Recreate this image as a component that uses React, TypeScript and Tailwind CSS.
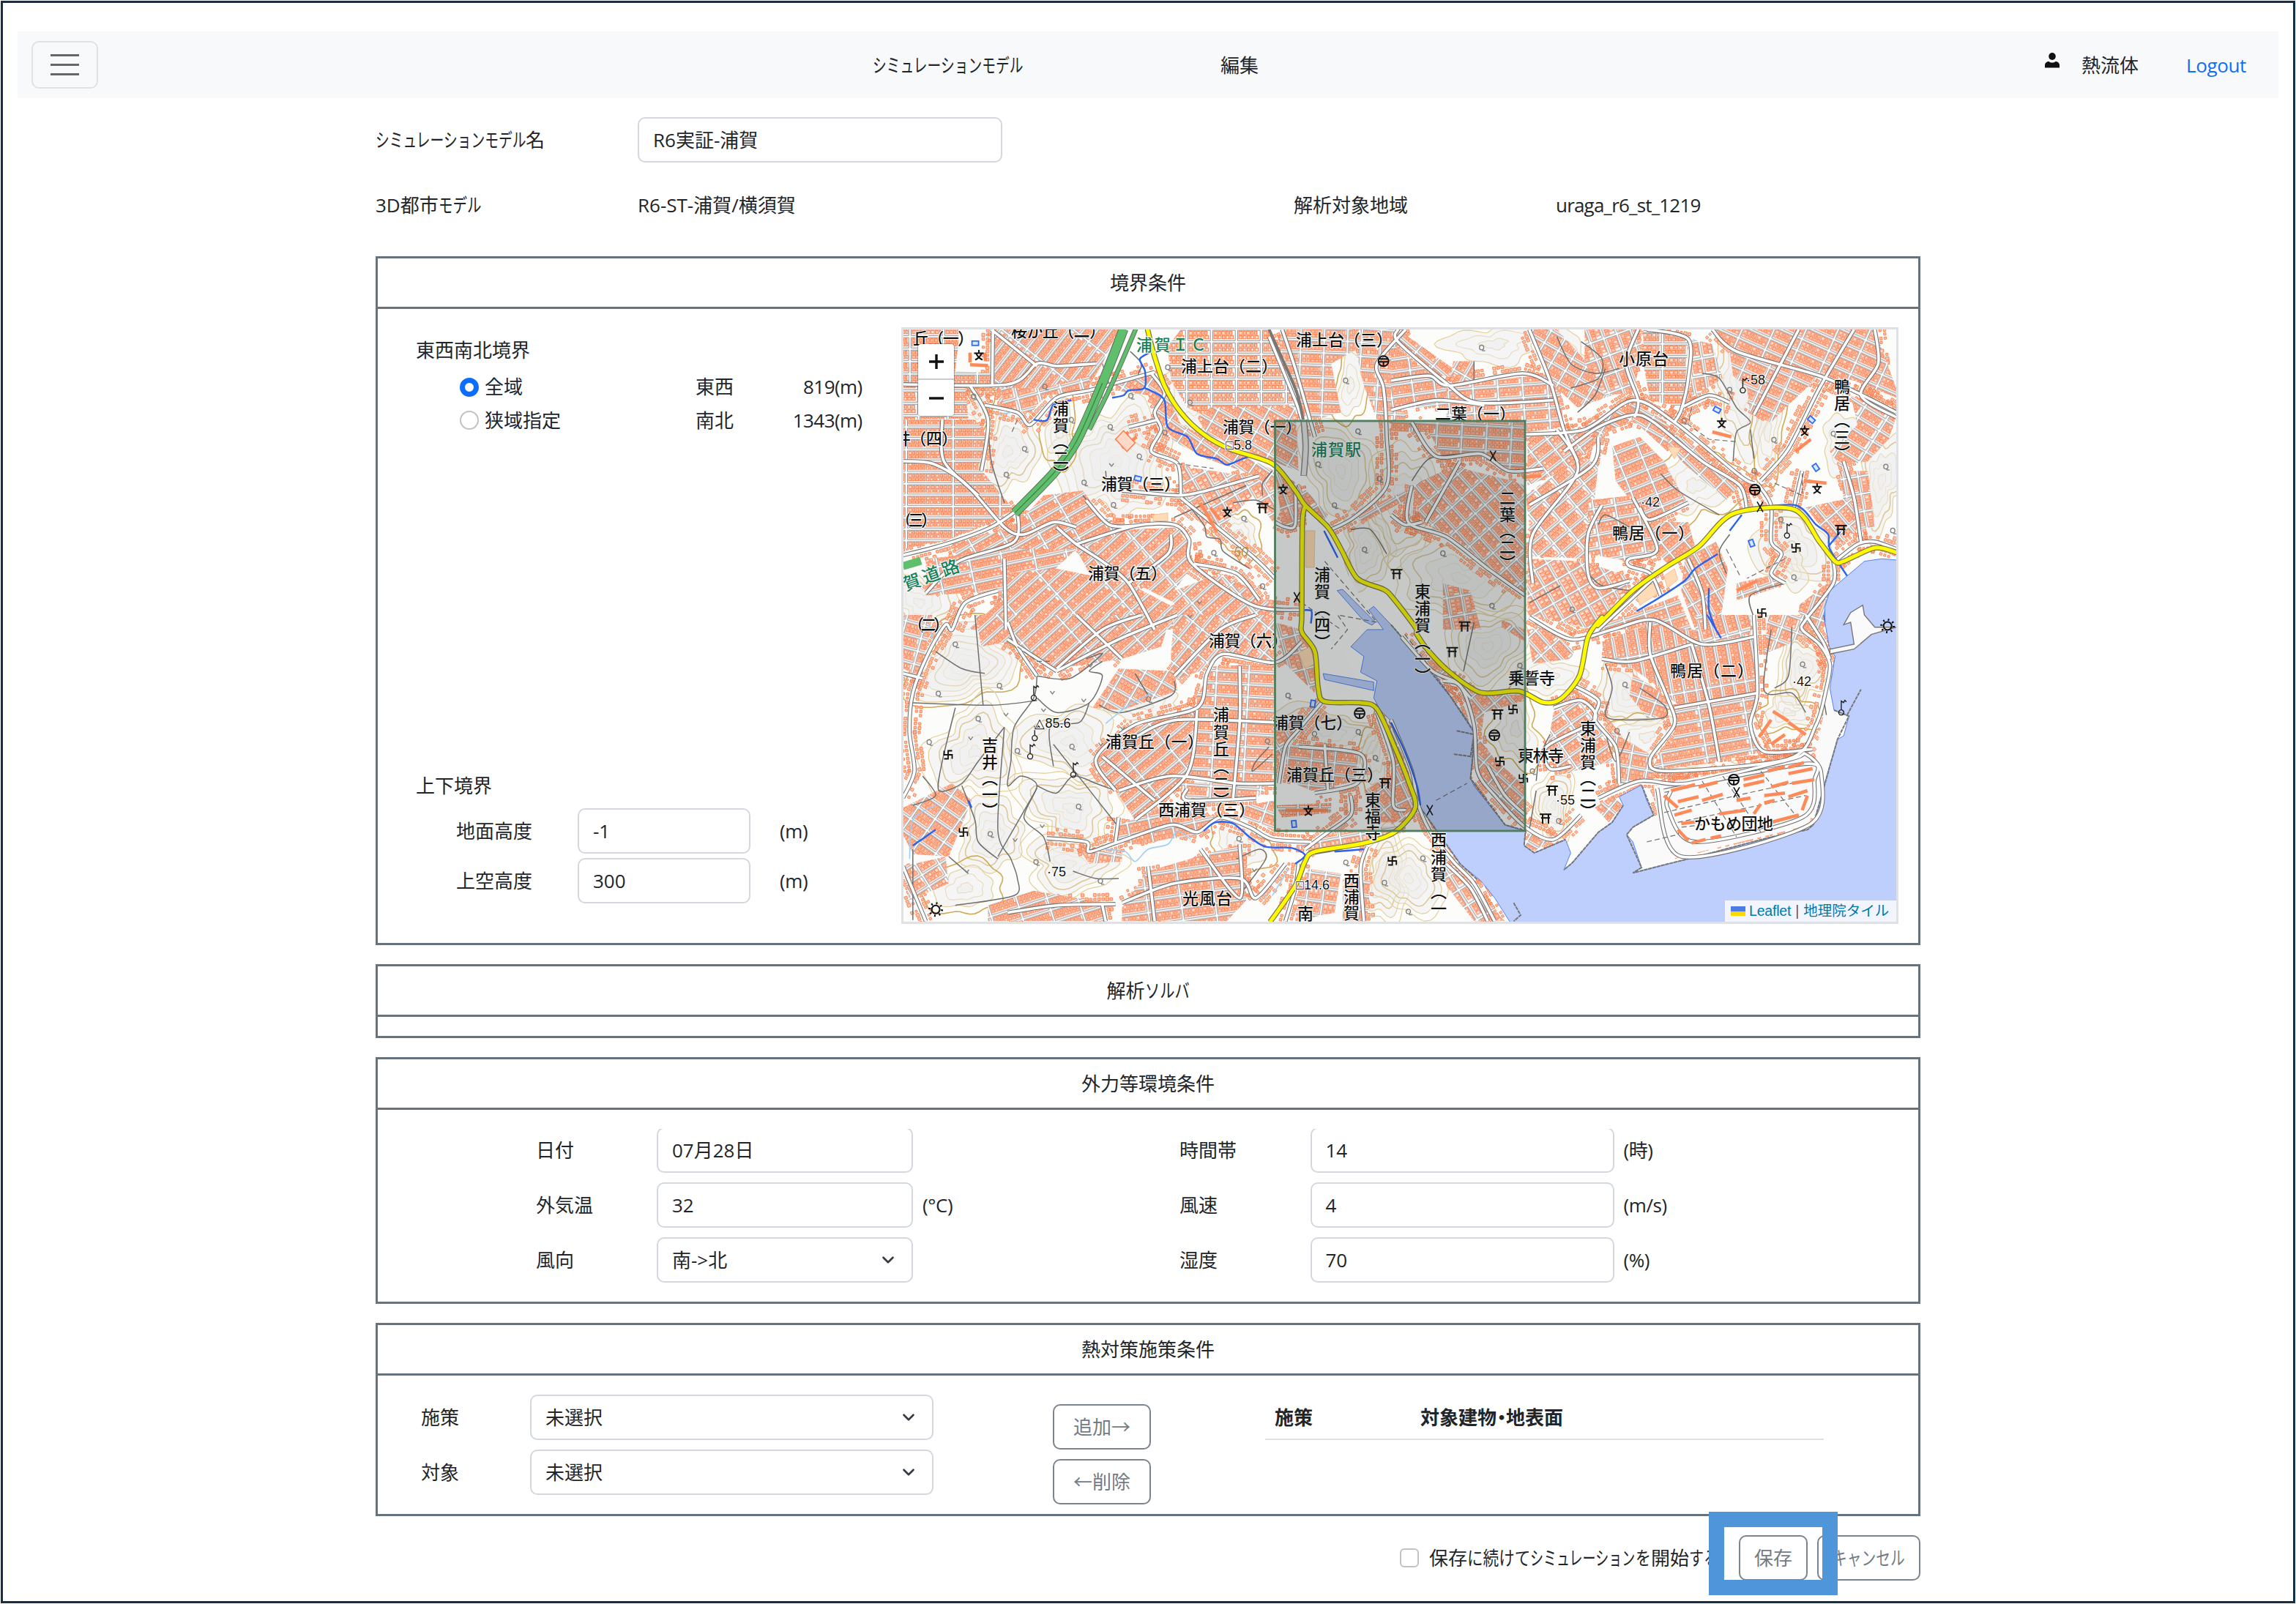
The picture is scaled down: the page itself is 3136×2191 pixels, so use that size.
import React from 'react';
import { ChevronDown } from 'lucide-react';

/* ---------- map geometry ---------- */

type Pt = [number, number];

// The map is digitised in four sheets; each has its own origin and scale.
const SHEETS: Record<string, [number, number, number, number]> = {
  a: [1220, 430, 2.24, 3],
  b: [1900, 430, 2.119, 3],
  c: [1220, 840, 2.24, 3],
  d: [1900, 840, 2.119, 3],
};

// "a 10 20 30 40 c 5 6" -> points; a letter switches the sheet.
function pts(src: string): Pt[] {
  const out: Pt[] = [];
  let s = SHEETS.a;
  const tok = src.trim().split(/\s+/);
  for (let i = 0; i < tok.length; ) {
    if (SHEETS[tok[i]]) {
      s = SHEETS[tok[i]];
      i++;
    } else {
      out.push([s[0] + Number(tok[i]) / s[2], s[1] + Number(tok[i + 1]) / s[3]]);
      i += 2;
    }
  }
  return out;
}

const f = (n: number) => n.toFixed(1);

const line = (src: string, close = false) =>
  'M' + pts(src).map((p) => f(p[0]) + ' ' + f(p[1])).join('L') + (close ? 'Z' : '');

function curve(src: string): string {
  const p = pts(src);
  let d = `M${f(p[0][0])} ${f(p[0][1])}`;
  for (let i = 0; i < p.length - 1; i++) {
    const p0 = p[Math.max(0, i - 1)];
    const p1 = p[i];
    const p2 = p[i + 1];
    const p3 = p[Math.min(p.length - 1, i + 2)];
    d += `C${f(p1[0] + (p2[0] - p0[0]) / 7)} ${f(p1[1] + (p2[1] - p0[1]) / 7)} ${f(p2[0] - (p3[0] - p1[0]) / 7)} ${f(p2[1] - (p3[1] - p1[1]) / 7)} ${f(p2[0])} ${f(p2[1])}`;
  }
  return d;
}

function rng(seed: number) {
  let s = seed * 9301 + 49297;
  return () => {
    s = (s * 9301 + 49297) % 233280;
    return s / 233280;
  };
}

// District: outline, street angle, block length, block depth
const DISTRICTS: [string, number, number, number][] = [
  ['a 30 60 200 60 200 110 190 230 300 240 300 280 30 290', 0, 46, 17],
  ['a 310 60 690 60 640 200 600 290 460 310 420 390 330 380 310 290', -52, 60, 15],
  ['a 30 290 220 290 230 425 30 430', 0, 40, 17],
  ['a 30 430 250 430 290 500 260 620 370 800 170 920 30 960', 0, 64, 15.5],
  ['a 180 940 370 870 460 740 580 720 640 830 740 870 640 930 540 960 380 960 200 1010', -30, 44, 16],
  ['a 100 1000 380 960 560 960 480 1060 350 1130 100 1150', -12, 44, 16],
  ['a 560 960 730 880 890 870 920 1020 860 1130 1000 1060 1168 1190 1168 1290 870 1290 860 1180 740 1100 600 1060', -42, 56, 17],
  ['a 340 1060 500 1040 720 1100 860 1200 850 1290 230 1290 330 1170', -42, 60, 17],
  ['a 840 130 880 60 1150 60 1160 110 1230 360 980 430 900 380 850 270', 0, 34, 17],
  ['a 1190 60 1568 60 1568 130 1420 140 1340 200 1370 400 1290 430 1260 400 1180 120', 2, 32, 17],
  ['a 970 380 1230 370 1240 640 1160 600 960 490 930 420', 30, 30, 18],
  ['a 680 280 800 240 840 330 880 450 1090 590 1168 640 1168 770 1090 650 960 590 860 520 800 400 780 330 680 310', 35, 26, 20],
  ['a 880 620 1080 660 1168 700 1168 860 1100 740 1000 880 940 840 890 760', 60, 24, 20],
  ['a 330 300 460 300 600 250 600 310 470 330 420 400 340 390', -15, 30, 18],
  ['a 1168 640 1250 700 1250 870 1190 870', 70, 24, 20],
  ['a 1250 700 1330 820 1310 860 1250 770', 60, 24, 20],
  ['a 1400 820 1568 720 1568 760 1440 850', -30, 30, 18],
  ['a 1400 60 1523 60 1568 430 1480 430 1440 290', 4, 26, 19],
  ['b 0 120 160 290 160 370 0 390', -8, 30, 17],
  ['b 170 290 470 240 490 330 500 460 400 480 160 430 160 330', -4, 34, 17],
  ['b 20 60 160 200 230 270 110 240 20 110', 40, 30, 18],
  ['b 180 190 240 190 240 280 170 270', -60, 24, 18],
  ['b 0 440 389 440 389 650 260 590 150 590 110 480 0 480', 3, 34, 17],
  ['b 60 700 180 620 350 680 389 700 389 1150 170 900 90 850', 48, 28, 18],
  ['b 400 60 480 60 590 230 640 330 540 380 480 300 430 160', 30, 22, 19],
  ['b 560 60 725 60 720 200 700 320 620 330 560 200', 70, 24, 19],
  ['b 730 60 860 90 850 380 750 350 730 200', 0, 36, 17],
  ['b 870 100 930 120 960 260 870 340', 80, 24, 18],
  ['b 940 60 1400 60 1462 300 1462 340 1340 270 1170 220 980 150', 24, 40, 17],
  ['b 980 150 1240 250 1150 370 1100 440 1040 410 1030 300 990 250', 24, 32, 18],
  ['b 1330 330 1462 420 1440 510 1380 600 1300 620 1270 560 1350 450', 32, 34, 17],
  ['b 1300 640 1380 640 1400 870 1320 890', 80, 24, 20],
  ['b 390 740 550 580 600 610 570 1000 410 990', -40, 28, 18],
  ['b 395 480 560 480 600 520 500 640 395 700', -38, 28, 18],
  ['b 560 460 640 400 710 360 790 440 840 520 800 560 700 430 600 500', 30, 26, 18],
  ['b 640 540 720 500 790 600 850 760 740 850 650 680', -22, 32, 18],
  ['b 570 760 700 740 770 960 690 1010 570 980', -10, 30, 18],
  ['b 760 440 860 520 1010 700 970 760 840 600', 44, 30, 17],
  ['b 395 1000 560 1010 700 1080 590 1290 395 1230', 60, 26, 20],
  ['b 740 850 860 850 880 950 800 1020 760 960', -40, 26, 18],
  ['b 850 1000 940 930 975 1040 950 1290 880 1290 840 1130', 60, 30, 18],
  ['b 610 1270 830 1150 870 1290 600 1290', -18, 30, 18],
  ['b 1180 1190 1290 1070 1250 1290 1190 1290', -70, 30, 17],
  ['b 1200 790 1330 750 1350 880 1290 950', 50, 26, 18],
  ['b 1000 1100 1120 1060 1130 1110 1050 1150 1000 1170', -20, 22, 19],
  ['b 150 1100 230 1130 260 1290 150 1290', 80, 26, 20],
  ['c 30 0 120 0 100 140 80 250 30 220', 15, 26, 18],
  ['c 250 0 850 0 820 130 700 180 500 220 350 110 270 130', -42, 60, 17],
  ['c 860 0 1168 0 1168 190 1000 150 940 230 850 270 850 150', -50, 30, 17],
  ['c 980 210 1168 200 1168 690 1040 690 910 660 930 330', 3, 44, 17],
  ['c 620 590 720 470 920 380 910 650 740 840 680 720', -40, 54, 16],
  ['c 690 220 860 230 870 310 700 390 610 380', 30, 26, 20],
  ['c 860 690 1150 680 1110 760 900 750', 4, 34, 17],
  ['c 690 860 840 780 1000 830 930 900 750 940 690 930', -12, 30, 18],
  ['c 1080 780 1168 760 1168 880 1060 830', 20, 28, 18],
  ['c 1200 530 1430 560 1420 680 1280 720 1210 680', 6, 32, 17],
  ['c 1170 780 1340 770 1340 810 1190 830', 0, 30, 18],
  ['c 1220 960 1350 890 1568 860 1568 890 1420 930 1290 960', -10, 28, 19],
  ['c 1440 720 1568 620 1568 850 1480 850', 50, 24, 19],
  ['c 700 1200 780 1050 1060 940 1080 1170 1020 1255 700 1255', -8, 46, 17],
  ['c 290 1190 430 1130 650 1180 650 1255 290 1255', -18, 40, 17],
  ['c 30 790 180 690 240 760 170 990 60 980 30 900', 35, 28, 19],
  ['c 30 1030 160 990 170 1100 50 1170', -32, 28, 18],
  ['c 1270 1040 1370 1060 1350 1220 1230 1255 1240 1120', 8, 22, 19],
  ['c 1375 1080 1460 1090 1450 1255 1375 1255', 8, 22, 19],
  ['c 1168 30 1250 60 1290 170 1290 320 1200 200', 75, 24, 20],
  ['c 1168 460 1230 480 1190 560 1168 640', 60, 24, 20],
  ['c 580 980 700 960 700 1010 600 1020', 10, 22, 19],
  ['d 320 20 389 60 389 110 320 50', 45, 30, 18],
  ['d 393 60 450 50 530 150 520 180 410 200', 48, 30, 17],
  ['d 610 110 740 40 1050 90 1060 320 830 370 790 310 700 220 620 180', 80, 60, 17],
  ['d 880 0 1040 0 1040 80 900 120', 75, 34, 18],
  ['d 820 370 1060 320 1040 450 1080 560 900 610 760 640 770 580 820 500', -10, 62, 17],
  ['d 1090 0 1200 0 1220 60 1150 120 1080 160', 20, 22, 19],
  ['d 470 400 540 350 600 440 640 600 500 650 450 560', -35, 28, 18],
  ['d 640 480 760 580 760 680 660 690', 10, 24, 20],
  ['d 700 240 800 340 800 420 740 420 690 330', 20, 24, 20],
  ['d 80 150 260 320 389 330 389 350 270 400 262 480 210 290 150 270', 50, 26, 19],
  ['d 250 500 300 590 386 700 386 870 250 650', 42, 24, 19],
  ['d 0 420 60 700 60 800 0 860', 65, 24, 19],
  ['d 395 895 460 920 415 970 390 945', 30, 20, 18],
  ['d 590 790 640 740 670 780 630 850', 40, 22, 18],
  ['d 150 1030 220 1100 330 1255 240 1255 160 1110', 58, 24, 19],
];

// Sparse apartment blocks
const SLABS = (
  'd 790 740 830 790 d 830 765 890 745 d 900 760 960 735 d 810 720 880 695 d 890 705 945 685 ' +
  'd 1020 675 1080 655 d 1090 640 1140 622 d 1150 625 1195 605 d 1020 700 1080 680 d 1100 705 1150 685 ' +
  'd 1160 690 1225 675 d 1150 650 1220 630 d 1150 745 1205 720 d 950 815 1025 800 d 1050 815 1070 775 ' +
  'd 1080 770 1110 760 d 820 820 870 800 d 830 880 860 925 d 870 935 910 920 d 925 915 955 905 ' +
  'd 1190 800 1205 740 d 1100 850 1180 820 d 840 855 880 848 d 1100 530 1140 490 d 1105 395 1150 435 ' +
  'd 1150 440 1200 490 d 1065 500 1100 430 d 1080 740 1140 730 d 1000 760 1040 750 ' +
  'a 235 205 290 208 a 235 155 235 195 a 280 155 282 190 ' +
  'a 690 520 720 480 a 700 545 745 500 a 940 770 990 890 a 970 790 1000 840 b 380 665 435 660 ' +
  'b 1000 1130 1060 1090 b 930 480 985 500 b 1170 560 1215 510 b 1195 680 1260 690 c 1200 800 1330 800'
)
  .split(/(?=[abcd] )/)
  .map((s) => s.trim())
  .filter(Boolean);

// Hill: sheet, centre, radii, rings, seed
const HILLS: [string, number, number, number, number, number, number][] = [
  ['a', 350, 560, 95, 190, 5, 2],
  ['a', 680, 600, 160, 270, 7, 3],
  ['a', 1060, 900, 70, 120, 4, 4],
  ['a', 1370, 640, 130, 220, 6, 5],
  ['a', 1450, 950, 90, 160, 5, 6],
  ['a', 1400, 290, 60, 170, 4, 7],
  ['a', 920, 300, 90, 230, 3, 8],
  ['a', 250, 380, 60, 110, 4, 9],
  ['a', 80, 1180, 110, 140, 5, 10],
  ['a', 940, 1210, 60, 90, 3, 12],
  ['a', 510, 480, 60, 160, 4, 13],
  ['b', 300, 120, 150, 90, 3, 14],
  ['b', 40, 760, 110, 280, 6, 15],
  ['b', 200, 1080, 190, 200, 6, 16],
  ['b', 520, 200, 70, 130, 3, 17],
  ['b', 1010, 270, 90, 270, 5, 18],
  ['b', 1090, 480, 60, 200, 4, 19],
  ['b', 1420, 680, 70, 220, 5, 20],
  ['b', 880, 700, 130, 190, 4, 21],
  ['b', 1160, 950, 110, 170, 5, 22],
  ['b', 1150, 1030, 60, 100, 3, 23],
  ['b', 540, 1180, 80, 90, 3, 24],
  ['b', 1300, 520, 60, 120, 3, 25],
  ['c', 220, 200, 180, 180, 8, 26],
  ['c', 250, 560, 140, 230, 6, 27],
  ['c', 540, 520, 150, 170, 5, 28],
  ['c', 540, 790, 160, 170, 6, 29],
  ['c', 540, 1020, 170, 130, 6, 30],
  ['c', 300, 900, 110, 150, 5, 31],
  ['c', 220, 1120, 130, 120, 4, 32],
  ['c', 770, 370, 110, 80, 3, 33],
  ['c', 1110, 580, 60, 150, 3, 34],
  ['c', 1320, 480, 170, 110, 5, 35],
  ['c', 1060, 950, 120, 110, 4, 36],
  ['c', 1500, 1080, 90, 170, 6, 37],
  ['c', 1480, 560, 60, 200, 4, 38],
  ['d', 280, 130, 120, 190, 6, 39],
  ['d', 460, 250, 90, 90, 3, 40],
  ['d', 680, 330, 90, 150, 5, 41],
  ['d', 360, 470, 90, 160, 4, 42],
  ['d', 470, 780, 70, 140, 6, 43],
  ['d', 740, 500, 120, 120, 4, 44],
  ['d', 1190, 220, 80, 180, 6, 45],
  ['d', 1150, 400, 90, 100, 4, 46],
  ['d', 50, 1080, 110, 170, 6, 47],
  ['d', 880, 610, 180, 40, 2, 48],
];

function rings([sheet, x, y, rx, ry, n, seed]: (typeof HILLS)[number]): string[] {
  const s = SHEETS[sheet];
  const r = rng(seed);
  const cx = s[0] + x / s[2];
  const cy = s[1] + y / s[3];
  const ph = [r() * 6.3, r() * 6.3, r() * 6.3];
  const amp = [0.1 + r() * 0.14, 0.1 + r() * 0.12, 0.05 + r() * 0.07];
  return Array.from({ length: n }, (_, i) => {
    const k = (i + 0.7) / n;
    let d = '';
    for (let j = 0; j < 48; j++) {
      const t = (j / 48) * Math.PI * 2;
      const w =
        1 +
        amp[0] * Math.sin(2 * t + ph[0] + i * 0.1) +
        amp[1] * Math.sin(3 * t + ph[1] - i * 0.15) +
        amp[2] * Math.sin(7 * t + ph[2] + i * 0.2);
      d += (j ? 'L' : 'M') + f(cx + (rx / s[2]) * k * w * Math.cos(t)) + ' ' + f(cy + (ry / s[3]) * k * w * Math.sin(t));
    }
    return d + 'Z';
  });
}

const STREETS = [
  'a 30 985 160 940 300 870 380 800',
  'a 30 600 120 610 220 690 340 870 400 900 490 850 560 870',
  'a 30 285 350 285 440 200 500 210 620 200',
  'a 305 60 303 285',
  'a 300 60 440 210',
  'a 150 430 155 600 260 740',
  'a 235 290 290 430 270 640',
  'a 280 370 380 400 420 450 500 340 600 310 680 280 800 235',
  'a 560 940 740 865 860 860 905 920 915 1020 1100 1190 1250 1210',
  'a 380 800 370 930 200 1010 100 1140',
  'a 500 870 560 940 640 1010 720 1100 800 1290',
  'a 340 1000 345 1290',
  'a 720 1100 840 980 850 900',
  'a 1150 90 1230 350 1250 430',
  'a 1190 60 1230 220 1290 500',
  'a 1568 60 1480 200 1500 300 1510 500 1510 700 1410 830 1340 880',
  'a 790 240 830 320 800 400 820 470 790 560 870 610 880 740',
  'a 590 760 660 860 740 865',
  'a 700 720 870 740 960 720 1120 660',
  'a 880 750 1100 990 1168 1080',
  'a 720 460 810 430',
  'a 320 1130 220 1180 180 1290 c 160 40 110 150 60 320 50 480 65 640 30 750',
  'a 1120 1170 1050 1060 920 1020',
  'a 1230 700 1230 860 1200 870 1168 850',
  'b 20 60 20 110 160 280 250 360 470 350',
  'b 400 60 460 270 500 470 540 600',
  'b 0 390 130 350 270 370',
  'b 0 270 110 250 170 290 380 240 470 290',
  'b 390 490 560 470 700 350 820 440 1010 660 1050 690',
  'b 500 560 600 460 700 410 760 440 900 600 1010 700 1030 800',
  'b 740 60 860 100 860 260 840 390 820 440',
  'b 840 380 920 330 980 360',
  'b 715 60 680 200 715 350 705 420',
  'b 1340 60 1240 300 1150 550 1070 680',
  'b 930 60 1000 150 1240 250 1350 320 1462 400',
  'b 1180 60 1050 410',
  'b 1400 60 1410 200 1360 330 1462 420',
  'b 1060 690 1100 780 1100 930 1130 980 1100 1060 1140 1100',
  'b 1165 795 1190 640',
  'b 1310 600 1340 750 1360 930',
  'b 1285 1010 1350 940 1400 930 1462 960',
  'b 1280 1010 1280 1100 1200 1250 1190 1290 d 1240 120 1270 200 1260 300 1230 450 1150 590 800 640 750 590 820 450 800 340 750 160 750 30',
  'b 480 470 540 640 410 900 410 1100',
  'b 600 500 580 620 400 780',
  'b 610 780 570 900 570 1060 600 1120 690 1090',
  'b 700 750 770 960 690 1000 690 1030 750 1060 780 1150',
  'b 720 790 750 840 860 770',
  'b 860 1000 900 1140 910 1290',
  'b 760 1080 600 1290',
  'b 60 700 50 850 160 910 280 1040 389 1150',
  'b 0 820 40 860 90 850',
  'b 200 600 100 850',
  'b 60 440 130 580 260 570 340 640 440 630',
  'd 400 10 520 100 640 60 760 20 900 120 1050 90',
  'd 610 180 700 190 870 120',
  'd 530 290 600 350 590 430 650 540 660 690',
  'd 1050 0 1060 320 1040 450 1080 560 1220 550',
  'd 870 120 920 370 950 600',
  'd 820 380 1060 320',
  'd 600 750 720 680 860 690 1160 590 1200 570 1245 650 1210 860 840 990 770 710',
  'd 790 720 1200 610 1225 680 1190 830 880 930 800 790 810 720',
  'd 30 90 120 230 200 290 240 450 250 640 300 740 389 870 470 920 550 820',
  'd 470 380 550 350 590 430 450 540 460 630 520 620',
  'd 0 430 60 640 75 760 110 880 180 1010 240 1100 300 1255',
  'd 160 1020 230 1120 280 1255',
  'd 150 270 190 280 230 340',
  'd 280 620 330 740 389 820',
  'd 1200 0 1250 110 1270 180',
  'c 350 30 380 130 440 250',
  'c 500 220 640 60 760 0',
  'c 500 230 690 100 870 0',
  'c 350 100 500 230',
  'c 560 0 700 180',
  'c 860 250 1000 60 1110 0',
  'c 680 720 620 590 740 450 930 380 960 240 1010 160 1168 195 1250 110',
  'c 740 500 870 430 1168 440',
  'c 930 390 900 650 740 840',
  'c 690 720 850 660 1050 690 1168 690',
  'c 640 580 800 760',
  'c 1060 210 1060 440 1040 750',
  'c 900 710 900 760 1110 750',
  'c 470 915 590 930 600 970 690 930 850 860 930 890 1000 830 1090 870 1160 920 1280 930',
  'c 680 930 690 830',
  'c 700 1180 860 1100 1060 1080 1110 1160 1200 1020',
  'c 350 1220 500 1190 680 1185',
  'c 1060 940 1060 1160 940 960',
  'c 780 1030 800 1255',
  'c 1240 1020 1230 1120 1200 1255',
  'c 1310 360 1240 470 1200 540 1180 690',
  'c 1240 540 1430 570 1420 690 1290 730',
  'c 1320 530 1330 720',
  'c 1480 400 1530 600 1530 780 1568 800',
  'c 1400 740 1400 820 1320 900 1260 960',
  'c 1450 950 1430 1040 1440 1255',
  'c 30 240 90 260',
  'c 30 1030 100 1255',
  'c 640 1190 650 1255',
];

const PATHS = [
  'a 725 150 760 200 750 250 800 230',
  'a 650 640 655 730',
  'a 580 740 640 830 690 880',
  'a 890 760 950 860 960 910 1000 920 1010 970 1090 1040',
  'a 1040 770 1110 760 1168 800',
  'a 1130 740 1130 690 1160 640',
  'a 860 830 1080 700',
  'a 1400 880 1460 880 1510 980',
  'a 290 430 300 600 340 770',
  'b 480 90 520 200 590 240 660 220',
  'b 550 110 610 180 600 260 520 300',
  'b 900 240 950 260 1000 380 1040 440 1000 480 990 600',
  'b 1040 470 1050 590',
  'b 620 220 590 330 540 400',
  'b 240 190 240 280',
  'b 60 680 110 590 200 570',
  'b 570 1060 610 1110 690 1130',
  'b 780 650 830 720 950 820',
  'b 490 1110 400 1180',
  'b 600 860 620 820 690 870',
  'b 980 900 950 970 970 1060',
  'b 1140 1100 1040 1150 1050 1240',
  'c 130 150 210 220 280 240',
  'c 60 360 300 370 440 350',
  'c 440 250 430 340 370 460 360 600 350 700 390 660 440 700 400 830 460 910 480 1010',
  'c 440 340 500 400 600 360 640 250 600 230 640 190',
  'c 440 250 540 260 640 160 590 180',
  'c 600 360 570 440 480 460 490 620',
  'c 190 380 150 600 140 720 210 690 260 600 340 460',
  'c 340 460 320 880 360 1000 380 1080 370 1150 190 1190',
  'c 440 700 500 730 550 660 620 690 680 720',
  'c 320 990 440 710',
  'c 250 0 275 370',
  'c 490 530 690 870',
  'c 90 660 130 740 60 780',
  'c 550 1050 620 1080 690 1080',
  'c 210 700 250 840 260 930 320 1000',
  'c 1050 1000 1120 960 1140 1000 1070 1130',
  'c 630 370 700 400 850 330 860 270',
  'c 1150 540 1110 600 1100 640 1160 570',
  'c 740 240 780 330',
  'c 1290 980 1370 960 1440 930',
  'c 170 990 230 1060',
  'c 60 960 60 1250',
  'd 620 200 640 300 620 410 670 430 790 420 790 370 720 300',
  'd 420 680 430 580 460 490',
  'd 620 480 650 600 690 480',
  'd 400 880 420 720',
  'd 1100 60 1080 310 1160 320 1200 400',
  'd 240 30 210 230',
  'd 1160 50 1150 250 1110 300',
  'd 1250 330 1260 410',
];

const DASHES = [
  'a 1320 1010 1480 1260 c 1360 0 1390 60 1340 140',
  'a 1250 1180 1370 1290',
  'a 380 430 360 490',
  'a 640 200 660 280',
  'a 870 610 980 630',
  'b 870 380 860 450 920 510 1000 520',
  'b 1110 690 1190 740 1190 650',
  'b 1140 1000 1030 1080',
  'b 970 960 1010 1070',
  'd 740 930 830 900 840 870 900 860',
  'd 790 810 1000 740 1190 680',
  'd 830 850 1200 740',
  'd 900 680 1000 910',
  'd 960 660 1070 890',
  'd 130 760 220 690',
  'c 380 130 440 190 480 190',
  'd 40 80 110 210',
  'd 1070 640 1170 820',
];

const RIVERS = [
  'a 800 145 755 180 770 230 768 300 720 310 705 330 670 340',
  'a 768 300 790 312 830 350 840 460 900 500 930 570 990 590 1020 615 1060 595 1090 580',
  'a 430 430 470 432 490 370 545 350',
  'c 950 885 985 850 1040 855 1090 910 1140 950 1220 955 1260 985 1230 1020',
  'c 60 945 130 880',
  'c 1350 970 1440 960',
  'c 230 760 240 790',
  'b 1035 795 1170 780 1230 860 1265 900 1270 960 1320 1070',
  'b 1265 950 1300 890',
  'b 710 1215 770 1165 850 1090 880 1040 945 980',
  'b 920 1120 920 1210 940 1290',
  'd 915 0 955 95',
  'b 980 885 1015 820',
  'a 1318 885 1360 995',
  'a 1258 1210 1280 1215 1278 1265',
  'd 0 440 40 560 75 700 85 780',
];

const BROOKS = [
  'c 650 445 720 370 790 320',
  'c 650 960 710 970 740 1010 780 960 840 940 870 885 910 920',
  'a 320 410 360 400',
  'c 1210 1040 1160 1150',
  'c 50 1000 60 840 130 780',
  'c 120 100 110 30',
];

const YELLOW = [
  'a 778 58 795 150 830 290 880 400 950 490 1030 550 1160 610 1230 720 1260 780 1330 870 1370 960 1420 1080 1500 1125 b 5 1160 70 1280 d 75 80 110 150 170 235 260 318 370 312 440 358 490 345 545 250 570 90 610 10 b 600 1270 700 1130 800 1030 890 950 990 815 1165 797 1240 930 1285 1010 1310 1010 1400 955 1465 975',
  'a 1262 780 1252 850 1250 1230 c 1250 70 1290 150 1300 300 1320 355 1430 360 1480 385 d 10 540 50 680 70 790 10 890 c 1440 935 1290 970 1260 1010 1230 1110 1153 1258',
];

const SEA = [
  'b 1465 1005 1420 1000 1370 1010 1320 1070 1270 1130 1255 1200 1256 1260 d 1252 0 1268 130 1285 170 1270 300 1282 390 1325 415 1310 495 1292 510 1265 640 1240 770 1222 860 1205 880 1100 910 900 985 700 1057 725 1035 700 930 682 900 700 870 760 820 740 760 725 697 660 745 672 780 640 850 600 890 525 1015 500 1045 520 975 505 920 490 930 415 975 385 945 390 885 330 860 290 790 240 700 230 670 235 600 245 490 220 430 170 330 130 250 90 190 0 40 a 1470 1195 1455 1210 1500 1290 c 1450 60 1400 130 1440 170 1430 235 1480 270 1470 340 1490 390 d 0 435 40 560 75 700 85 790 130 880 200 1020 260 1090 300 1160 345 1260 1465 1260',
  'a 1358 1130 1375 1125 1475 1260 1465 1272 1440 1255',
  'c 1315 240 1470 275 1470 310 1320 265',
];

const PIER = 'd 1270 160 1340 140 1390 80 1462 50 1400 50 1370 0 b 1365 1190 1330 1220 1310 1270 d 1330 30 1340 120 1270 140';

const SHORE = [
  'd 1282 390 1325 415 1292 510 1240 770 1222 860 1205 880 1100 910 900 985 700 1057 725 1035 682 900 700 870 760 820 725 697',
  'd 672 780 640 850 600 890 525 1015 500 1045',
  'd 0 40 90 190 170 330 240 480 235 600 230 670 330 860 389 885 385 945 415 975 505 920',
  'd 85 790 130 880 200 1020 250 1085',
  'd 1320 410 1360 305',
  'd 355 1180 375 1230 355 1255',
  'd 190 475 240 490 230 580 180 570',
];

const GREEN = '#17805a';

type Label = [string, number, number, number, string?];

// text, left, right, centre y
const LABELS: Label[] = [
  ['丘（一）', 1247, 1330, 462],
  ['桜が丘（二）', 1381, 1510, 452],
  ['浦賀ＩＣ', 1552, 1648, 471, GREEN],
  ['浦上台（二）', 1613, 1745, 500],
  ['浦上台（三）', 1770, 1902, 464],
  ['二葉（一）', 1960, 2070, 565],
  ['小原台', 2211, 2279, 490],
  ['浦賀（一）', 1670, 1778, 583],
  ['浦賀駅', 1791, 1859, 614, GREEN],
  ['井（四）', 1222, 1308, 599],
  ['浦賀（三）', 1504, 1612, 661],
  ['浦賀（五）', 1486, 1594, 783],
  ['（三）', 1223, 1280, 710],
  ['（二）', 1240, 1297, 853],
  ['鴨居（一）', 2202, 2314, 728],
  ['浦賀（六）', 1651, 1759, 875],
  ['浦賀（七）', 1738, 1847, 987],
  ['浦賀丘（一）', 1510, 1644, 1013],
  ['浦賀丘（三）', 1757, 1889, 1058],
  ['西浦賀（三）', 1582, 1714, 1106],
  ['光風台', 1615, 1683, 1227],
  ['南', 1772, 1794, 1248],
  ['乗誓寺', 2060, 2124, 926],
  ['東林寺', 2073, 2136, 1032],
  ['鴨居（二）', 2281, 2395, 916],
  ['かもめ団地', 2314, 2422, 1125],
];

// text, centre x, top, bottom
const VERTICAL: [string, number, number, number][] = [
  ['浦賀（二）', 1449, 547, 658],
  ['鴨居（三）', 2516, 517, 630],
  ['二葉（二）', 2059, 669, 780],
  ['東浦賀（一）', 1943, 797, 934],
  ['浦賀（四）', 1806, 774, 888],
  ['浦賀丘（二）', 1668, 965, 1104],
  ['吉井（一）', 1352, 1007, 1118],
  ['東福寺', 1875, 1082, 1148],
  ['西浦賀', 1846, 1192, 1258],
  ['西浦賀（一', 1965, 1136, 1252],
  ['東浦賀（二）', 2169, 984, 1119],
];

const SPOTS: [string, number, number][] = [
  ['·58', 2398, 518],
  ['·42', 2254, 685],
  ['·42', 2461, 930],
  ['·55', 2138, 1092],
  ['△85.6', 1438, 987],
  ['·75', 1443, 1190],
  ['□14.6', 1793, 1208],
  ['□5.8', 1692, 607],
];

const SCHOOLS = 'a 262 165 1022 808 1193 715 b 957 443 1197 475 1233 712 c 1270 802';
const TEMPLES = 'b 1172 955 1073 1222 c 168 573 215 890 1527 1008 d 353 387 315 600 383 670';
const SHRINES = 'a 1130 793 1540 1063 b 1302 882 c 1505 690 d 213 47 177 152 308 408 466 720 447 835';
const POSTS = 'a 1500 190 b 1053 717 c 1427 403 d 299 493 992 675';
const POLICE = 'a 1235 1158 b 295 578 1068 787 d 1000 727 112 800';
const GEARS = 'c 130 1207 b 1437 1275';
const TOWERS = 'b 1018 290 1146 885 c 430 320 433 485 419 560 551 635 d 1303 380';
const POOLS = 'a 250 118 747 672 b 942 390 1215 430 1228 625 1042 935 c 1225 855 1283 362';
const TREES =
  'a 246 337 464 297 545 433 402 552 346 658 664 462 727 335 840 218 908 362 753 583 584 690 674 782 831 485 1384 272 1422 480 1300 615 1488 675 1350 783 1073 838 981 978 1130 1115 1442 965 ' +
  'b 262 137 150 980 292 1195 848 437 980 310 1108 515 1051 642 1128 842 1166 1078 1432 625 1280 490 1452 887 524 1210 ' +
  'c 190 123 138 325 325 293 260 428 110 524 380 560 547 542 781 348 567 788 437 1015 634 1093 297 900 1058 920 1145 520 1208 333 1289 490 1423 482 1475 588 1385 1017 1503 1100 ' +
  'd 373 210 677 288 1191 205 654 478 409 643 485 847 92 1000 50 1218';
const FIELDS = 'a 668 615 937 1178 908 1235 c 487 318 583 350 460 390 345 408 237 505 635 530 702 465 603 207 456 865 373 922 225 1050 1105 1045';

// Detached houses lining both sides of every street.
function streetHouses(): string {
  const r = rng(77);
  let d = '';
  for (const s of STREETS) {
    const p = pts(s);
    for (let i = 0; i < p.length - 1; i++) {
      const dx = p[i + 1][0] - p[i][0];
      const dy = p[i + 1][1] - p[i][1];
      const len = Math.hypot(dx, dy);
      const ux = dx / len;
      const uy = dy / len;
      for (let t = 2; t < len; t += 5.6) {
        for (const o of [-13, -7, 7, 13]) {
          if (r() > (Math.abs(o) > 10 ? 0.5 : 0.82)) continue;
          const x = p[i][0] + ux * t - uy * o;
          const y = p[i][1] + uy * t + ux * o;
          const a = 1.4 + r() * 0.9;
          d += `M${f(x - ux * a - uy * -a)} ${f(y - uy * a + ux * -a)}l${f(ux * 2 * a)} ${f(uy * 2 * a)}l${f(-uy * 2 * a)} ${f(ux * 2 * a)}l${f(-ux * 2 * a)} ${f(-uy * 2 * a)}z`;
        }
      }
    }
  }
  return d;
}

function District({ i, d }: { i: number; d: (typeof DISTRICTS)[number] }) {
  const [src, angle, len, depth] = d;
  const r = rng(i + 3);
  const houses: React.ReactNode[] = [];
  const cell = (depth - 5.4) / 2;
  for (let y = 0; y < 2; y++) {
    let x = 4;
    while (x < len - 4) {
      const w = 2.6 + r() * 2.4;
      houses.push(
        <rect
          key={y + '-' + x}
          x={x}
          y={3.6 + y * cell}
          width={Math.min(w, len - 2 - x)}
          height={cell - 1.4}
          fill={r() > 0.35 ? '#ffc3a8' : '#ffe3d6'}
          stroke="#fb7a49"
          strokeWidth={1}
        />,
      );
      x += w + 1.5;
    }
  }
  return (
    <>
      <pattern
        id={'district' + i}
        width={len}
        height={depth}
        patternUnits="userSpaceOnUse"
        patternTransform={`rotate(${angle}) translate(${i * 7} ${i * 3})`}
      >
        <rect width={len} height={depth} fill="#fff" />
        <path d={`M2.4 2.2H${len - 0.8}V${depth - 0.7}H2.4Z`} stroke="#858585" strokeWidth={0.9} fill="none" />
        {houses}
      </pattern>
      <path d={line(src, true)} fill={`url(#district${i})`} />
    </>
  );
}

function MapText({ t, x, y, w, color }: { t: string; x: number; y: number; w?: number; color?: string }) {
  return (
    <text x={x} y={y + 8} textLength={w} fill={color || '#111'} stroke="#fff" strokeWidth={2} paintOrder="stroke" strokeLinejoin="round">
      {t}
    </text>
  );
}

function TileMap() {
  return (
    <svg viewBox="1234 450 1356 809" className="block h-full w-full" preserveAspectRatio="none">
      <rect x={1234} y={450} width={1356} height={809} fill="#fcfcfb" />
      <g fill="none">
        {HILLS.map((h, i) => (
          <g key={i}>
            {rings(h).map((d, j) => (
              <path key={j} d={d} fill={j % 2 === 0 ? '#ededed' : 'none'} fillOpacity={0.45} stroke={j % 4 === 3 ? '#cfa955' : '#e5d09a'} strokeWidth={j % 4 === 3 ? 1.6 : 1.2} />
            ))}
          </g>
        ))}
      </g>
      <path d={streetHouses()} fill="#ffc3a8" stroke="#fb7a49" strokeWidth={0.9} />
      {DISTRICTS.map((d, i) => (
        <District key={i} i={i} d={d} />
      ))}
      <path
        d={line('d 760 700 1160 590 1200 570 1245 650 1210 860 840 990 725 1035 700 930 682 900 700 870 770 820', true)}
        fill="#fafafa"
      />
      <path d={line('d 1262 200 1285 300 1290 400 1325 415 1292 510 1240 770 1222 860 1230 560 1250 420', true)} fill="#fafafa" />
      <path d={line('a 1260 860 1330 880 1380 1040 1450 1200 1500 1290 c 1430 60 1380 150 1430 300 1330 340 1300 140 1255 60 a 1255 1000', true)} fill="#fafafa" />
      <g fill="#becffe" stroke="#2f6cf5" strokeWidth={0.8}>
        {SEA.map((s) => (
          <path key={s} d={line(s, true)} />
        ))}
      </g>
      <path d={line(PIER, true)} fill="#fafafa" stroke="#777" strokeWidth={1.4} />
      <g fill="none" stroke="#777" strokeWidth={2} strokeDasharray="5 1">
        {SHORE.map((s) => (
          <path key={s} d={line(s)} />
        ))}
      </g>
      <g fill="#ffdcb5" stroke="#f0b98a" strokeWidth={0.8}>
        {['a 1262 885 1290 885 1288 1035 1262 1035', 'b 705 1130 760 1100 775 1140 720 1190', 'b 790 1070 820 1040 830 1085 800 1120', 'b 800 540 838 545 820 590', 'a 795 820 840 812 840 845 795 845', 'c 1240 155 1275 130 1290 200 1260 220'].map(
          (s) => (
            <path key={s} d={line(s, true)} />
          ),
        )}
      </g>
      <g fill="none" stroke="#6f6f6f" strokeWidth={1.5}>
        {PATHS.map((s) => (
          <path key={s} d={curve(s)} />
        ))}
      </g>
      <g fill="none" stroke="#747474" strokeWidth={5.8} strokeLinejoin="round">
        {STREETS.map((s) => (
          <path key={s} d={curve(s)} />
        ))}
      </g>
      <g fill="none" stroke="#fff" strokeWidth={3.6} strokeLinejoin="round">
        {STREETS.map((s) => (
          <path key={s} d={curve(s)} />
        ))}
      </g>
      <g fill="none" stroke="#6f6f6f" strokeWidth={1.2} strokeDasharray="7 4">
        {DASHES.map((s) => (
          <path key={s} d={line(s)} />
        ))}
      </g>
      <g fill="none" stroke="#ff8a59" strokeWidth={4.5}>
        {SLABS.map((s) => (
          <path key={s} d={line(s)} />
        ))}
      </g>
      <path d={line('a 680 510 705 475 740 525 715 560', true)} fill="#ffd9c7" stroke="#fb7a49" strokeWidth={1.5} />
      <path d={line('a 240 150 c 0 0')} fill="none" />
      <path d={curve('a 1150 60 1190 180 1235 320 1256 440')} fill="none" stroke="#777" strokeWidth={4} />
      <path d={curve('a 1256 430 1262 540 1256 660')} fill="none" stroke="#888" strokeWidth={9} />
      <path d={curve('a 1256 430 1262 540 1256 658')} fill="none" stroke="#e8e8e8" strokeWidth={6} />
      <g fill="none" stroke="#9fd0f2" strokeWidth={1.6}>
        {BROOKS.map((s) => (
          <path key={s} d={curve(s)} />
        ))}
      </g>
      <g fill="none" stroke="#2b62ee" strokeWidth={2.4}>
        {RIVERS.map((s) => (
          <path key={s} d={curve(s)} />
        ))}
      </g>
      <g fill="none" stroke="#75754a" strokeWidth={7.4}>
        {YELLOW.map((s) => (
          <path key={s} d={curve(s)} />
        ))}
      </g>
      <g fill="none" stroke="#fff900" strokeWidth={5}>
        {YELLOW.map((s) => (
          <path key={s} d={curve(s)} />
        ))}
      </g>
      <g fill="none">
        <path d={curve('a 742 58 700 190 660 310 600 470')} stroke="#5c6e5c" strokeWidth={6.5} />
        <path d={curve('a 742 58 700 190 660 310 600 470')} stroke="#5fbf6c" strokeWidth={4.5} />
        <path d={curve('a 705 58 640 280 560 520 490 650 372 812')} stroke="#5c6e5c" strokeWidth={13.5} />
        <path d={curve('a 705 58 640 280 560 520 490 650 372 812')} stroke="#5fbf6c" strokeWidth={11.5} />
        <path d={curve('a 640 280 560 520 490 650 372 812')} stroke="#3c7d45" strokeWidth={1.2} />
        <path d={line('a 30 1030 85 1008')} stroke="#5fbf6c" strokeWidth={11} />
      </g>

      <g fill="#dbe6ff" stroke="#2f6cf5" strokeWidth={1.8}>
        {pts(POOLS).map(([x, y], i) => (
          <rect key={i} x={x - 4} y={y - 3.5} width={9} height={6} transform={`rotate(${i * 14} ${x} ${y})`} />
        ))}
      </g>
      <g fill="none" stroke="#7f7f7f" strokeWidth={1.3}>
        {pts(TREES).map(([x, y], i) => (
          <path key={i} d={`M${x + 5} ${y + 3.5}h-3.500v-1.500M${x - 3} ${y - 1}a3 3.200 0 1 0 6 0a3 3.200 0 1 0 -6 0`} />
        ))}
        {pts(FIELDS).map(([x, y], i) => (
          <path key={i} d={`M${x - 3} ${y - 2}l3 4l3 -4`} />
        ))}
      </g>
      <g fill="none" stroke="#222" strokeWidth={1.4}>
        {pts(TOWERS).map(([x, y], i) => (
          <path key={i} d={`M${x} ${y + 3}V${y - 9}l3 2l2 -3l2 2M${x - 3.5} ${y + 6.5}a3.5 3.5 0 1 0 7 0a3.5 3.5 0 1 0 -7 0`} />
        ))}
      </g>
      <g fill="none" stroke="#111" strokeWidth={2}>
        {pts(SCHOOLS).map(([x, y], i) => (
          <path key={i} d={`M${x} ${y - 7}v4M${x - 6.5} ${y - 2.5}h13M${x - 3.5} ${y - 2}q2.500 6 8.500 8.500M${x + 3.5} ${y - 2}q-2.500 6 -8.500 8.500`} />
        ))}
        {pts(SHRINES).map(([x, y], i) => (
          <path key={i} d={`M${x - 8} ${y - 6}h16M${x - 6} ${y - 1}h12M${x - 4} ${y - 6}V${y + 7}M${x + 4} ${y - 6}V${y + 7}`} />
        ))}
        {pts(POSTS).map(([x, y], i) => (
          <path key={i} d={`M${x - 7} ${y}a7 7 0 1 0 14 0a7 7 0 1 0 -14 0M${x - 6} ${y - 3}h12M${x - 6} ${y + 1}h12M${x} ${y + 1}v6`} />
        ))}
        {pts(POLICE).map(([x, y], i) => (
          <path key={i} d={`M${x - 4} ${y - 7}l8 14M${x + 4} ${y - 7}l-8 14`} strokeWidth={1.6} />
        ))}
        {pts(TEMPLES).map(([x, y], i) => (
          <path key={i} d={`M${x - 5.5} ${y - 5.5}v5.500h11v5.500M${x + 5.5} ${y - 5.5}h-5.500v11h-5.500`} strokeWidth={1.8} />
        ))}
        {pts(GEARS).map(([x, y], i) => (
          <g key={i}>
            <circle cx={x} cy={y} r={5.5} />
            <circle cx={x} cy={y} r={8.5} strokeWidth={3} strokeDasharray="2 4.7" />
          </g>
        ))}
      </g>

      <g className="font-['Noto_Sans_CJK_JP',sans-serif] text-[22px] font-medium">
        {LABELS.map(([t, x1, x2, y, c]) => (
          <MapText key={t + x1} t={t} x={x1} y={y} w={x2 - x1} color={c} />
        ))}
        {VERTICAL.map(([t, x, top, bottom]) => (
          <text
            key={t + x}
            x={x}
            y={top}
            textLength={bottom - top}
            className="[writing-mode:vertical-rl]"
            fill="#111"
            stroke="#fff"
            strokeWidth={2}
            paintOrder="stroke"
            strokeLinejoin="round"
          >
            {t}
          </text>
        ))}
        <g transform="rotate(-20 1272 786)" className="text-[24px]">
          <MapText t="賀道路" x={1232} y={786} w={80} color={GREEN} />
        </g>
      </g>
      <g className="font-['Liberation_Sans',sans-serif] text-[18px]" textAnchor="middle">
        {SPOTS.map(([t, x, y], i) => (
          <MapText key={i} t={t} x={x} y={y - 1} />
        ))}
        <text x={1695} y={760} fill="#b8903c" fontStyle="italic">
          50
        </text>
      </g>

      <rect x={1741.5} y={575} width={341.5} height={560} fill="#1d2b27" fillOpacity={0.24} stroke="#4f7d5c" strokeWidth={2.8} />
    </svg>
  );
}

/* ---------- form controls ---------- */

const FIELD = 'flex h-[62px] shrink-0 items-center rounded-[10px] border-2 border-[#d3d8de] bg-white px-[19px]';

function Field({ className, children }: { className: string; children: React.ReactNode }) {
  return <div className={`${FIELD} ${className}`}>{children}</div>;
}

function Select({ className, children }: { className: string; children: React.ReactNode }) {
  return (
    <div className={`${FIELD} justify-between pr-[19px] ${className}`}>
      <span>{children}</span>
      <ChevronDown className="size-[26px] text-[#343a40]" strokeWidth={2.4} />
    </div>
  );
}

// Condensed kana run: the outer width reserves the visual width of the scaled text.
function Kana({ className, scale, children }: { className: string; scale: string; children: React.ReactNode }) {
  return (
    <span className={`inline-block whitespace-nowrap ${className}`}>
      <span className={`inline-block origin-left ${scale}`}>{children}</span>
    </span>
  );
}

function Panel({ title, className, children }: { title: React.ReactNode; className: string; children?: React.ReactNode }) {
  return (
    <section className={`mt-[26px] border-[3px] border-[#68727b] ${className}`}>
      <h2 className="flex h-[69px] items-center justify-center border-b-[3px] border-[#68727b]">{title}</h2>
      {children}
    </section>
  );
}

function Button({ className, children }: { className: string; children: React.ReactNode }) {
  return (
    <button className={`flex h-[62px] items-center justify-center rounded-[10px] border-2 border-[#7b848c] text-[#737c84] ${className}`}>
      {children}
    </button>
  );
}

function Env({ label, unit, right, children }: { label: string; unit?: string; right?: boolean; children: React.ReactNode }) {
  return (
    <div className="flex h-[62px] items-center">
      <span className={right ? 'w-[178.5px]' : 'w-[165px]'}>{label}</span>
      {children}
      <span className="ml-[13px] tracking-[-0.4px]">{unit}</span>
    </div>
  );
}

export default function App() {
  return (
    <div className="h-[2191px] w-[3136px] overflow-hidden bg-white p-px font-['Open_Sans','Noto_Sans_CJK_JP',sans-serif] text-[26px] leading-[39px] text-[#212529]">
      <div className="h-[2189px] border-[3px] border-[#12304a]">
        <nav className="mx-[20px] mt-[39px] flex h-[91px] items-center bg-[#f8f9fb]">
          <button className="ml-[19px] flex h-[65px] w-[91px] flex-col items-center justify-center gap-[10px] rounded-[10px] border-2 border-[#e0e3e6]">
            <span className="h-[3px] w-[39px] bg-[#666]" />
            <span className="h-[3px] w-[39px] bg-[#666]" />
            <span className="h-[3px] w-[39px] bg-[#666]" />
          </button>
          <Kana className="ml-[1058px] mt-[1px] w-[205px]" scale="scale-x-[0.721]">
            シミュレーションモデル
          </Kana>
          <span className="ml-[270px] mt-[1px]">編集</span>
          <svg viewBox="0 0 20 21" className="mb-[12px] ml-[1074px] h-[21px] w-[20px]" fill="#111">
            <ellipse cx="10" cy="5" rx="4.8" ry="5" />
            <path d="M0 20.5v-3.5c0-3.4 3-5 5.500-5 1.200 1 2.800 1.500 4.500 1.500s3.300-.5 4.500-1.500c2.500 0 5.500 1.600 5.500 5v3.500z" />
          </svg>
          <span className="ml-[30px] mt-[1px]">熱流体</span>
          <a className="ml-[65px] mt-[2px] tracking-[-0.4px] text-[#0d6efd]">Logout</a>
        </nav>

        <main className="ml-[509px] w-[2110px]">
          <div className="mt-[26px] flex h-[62px] items-center">
            <span className="mt-[1px] w-[358px]">
              <Kana className="w-[205px]" scale="scale-x-[0.721]">
                シミュレーションモデル
              </Kana>
              名
            </span>
            <Field className="w-[498px] pt-[1px]">R6実証-浦賀</Field>
          </div>
          <div className="mt-[38px] flex h-[40px] items-center">
            <span className="w-[358px]">
              3D都市
              <Kana className="w-[60px]" scale="scale-x-[0.75]">
                モデル
              </Kana>
            </span>
            <span className="w-[896px]">R6-ST-浦賀/横須賀</span>
            <span className="w-[358px]">解析対象地域</span>
            <span className="tracking-[-0.8px]">uraga_r6_st_1219</span>
          </div>

          <Panel title="境界条件" className="mt-[50px] h-[941px]">
            <div className="flex">
              <div className="w-[715px] pl-[52px] pt-[37px]">
                <div>東西南北境界</div>
                <div className="mt-[8px] flex h-[45px] items-center pl-[60px]">
                  <span className="size-[26px] rounded-full border-[7px] border-[#0d6efd]" />
                  <span className="ml-[8px] w-[288px]">全域</span>
                  <span className="w-[60px]">東西</span>
                  <span className="w-[167.5px] text-right tracking-[-0.6px]">819(m)</span>
                </div>
                <div className="flex h-[46px] items-center pl-[60px]">
                  <span className="size-[26px] rounded-full border-2 border-[#bfc3c7]" />
                  <span className="ml-[8px] w-[288px]">狭域指定</span>
                  <span className="w-[60px]">南北</span>
                  <span className="w-[167.5px] text-right tracking-[-0.6px]">1343(m)</span>
                </div>
                <div className="mt-[457px]">上下境界</div>
                <div className="mt-[11px] flex items-center pl-[55px]">
                  <span className="w-[166px]">地面高度</span>
                  <Field className="w-[236px]">-1</Field>
                  <span className="ml-[40px] tracking-[-0.4px]">(m)</span>
                </div>
                <div className="mt-[6px] flex items-center pl-[55px]">
                  <span className="w-[166px]">上空高度</span>
                  <Field className="w-[236px]">300</Field>
                  <span className="ml-[40px] tracking-[-0.4px]">(m)</span>
                </div>
              </div>
              <div className="relative mt-[25px] h-[815px] w-[1362px] border-[3px] border-[#dee2e6]">
                <TileMap />
                <div className="absolute left-[20px] top-[20px] w-[49px] rounded-[4px] bg-white text-[#111] shadow-[0_0_0_1px_rgba(0,0,0,0.25)]">
                  <div className="flex h-[49px] items-center justify-center border-b-2 border-[#ccc]">
                    <svg viewBox="0 0 20 20" className="size-[20px]" stroke="currentColor" strokeWidth="3.4">
                      <path d="M10 0v20M0 10h20" />
                    </svg>
                  </div>
                  <div className="flex h-[49px] items-center justify-center">
                    <svg viewBox="0 0 20 20" className="size-[20px]" stroke="currentColor" strokeWidth="3.4">
                      <path d="M0 10h20" />
                    </svg>
                  </div>
                </div>
                <div className="absolute bottom-0 right-0 flex h-[29px] w-[234px] items-center whitespace-nowrap bg-[#f2f5fe] pl-[8px] font-['Liberation_Sans','Noto_Sans_CJK_JP',sans-serif] text-[19.5px] leading-[29px] text-[#0078a8]">
                  <span className="mr-[5px] flex h-[13px] w-[20px] flex-col">
                    <span className="flex-1 bg-[#4c7be1]" />
                    <span className="flex-1 bg-[#ffd500]" />
                  </span>
                  <span className="tracking-[-0.2px]">Leaflet</span>
                  <span className="mx-[6px] text-[#555]">|</span>
                  地理院タイル
                </div>
              </div>
            </div>
          </Panel>

          <Panel
            className="h-[101px]"
            title={
              <>
                解析
                <Kana className="w-[61px]" scale="scale-x-[0.78]">
                  ソルバ
                </Kana>
              </>
            }
          />

          <Panel title="外力等環境条件" className="h-[337px]">
            <div className="mt-[26px] flex h-[212px] overflow-hidden">
              <div className="-mt-[2px] flex w-[1095px] flex-col gap-[13px] pl-[216px]">
                <Env label="日付">
                  <Field className="w-[350px]">07月28日</Field>
                </Env>
                <Env label="外気温" unit="(°C)">
                  <Field className="w-[350px]">32</Field>
                </Env>
                <Env label="風向">
                  <Select className="w-[350px]">南-&gt;北</Select>
                </Env>
              </div>
              <div className="-mt-[2px] flex flex-col gap-[13px]">
                <Env right label="時間帯" unit="(時)">
                  <Field className="w-[415px]">14</Field>
                </Env>
                <Env right label="風速" unit="(m/s)">
                  <Field className="w-[415px]">4</Field>
                </Env>
                <Env right label="湿度" unit="(%)">
                  <Field className="w-[415px]">70</Field>
                </Env>
              </div>
            </div>
          </Panel>

          <Panel title="熱対策施策条件" className="h-[264px]">
            <div className="flex">
              <div className="mt-[26px] flex w-[863px] flex-col gap-[13px] pl-[59px]">
                <div className="flex items-center">
                  <span className="w-[149px]">施策</span>
                  <Select className="w-[551px]">未選択</Select>
                </div>
                <div className="flex items-center">
                  <span className="w-[149px]">対象</span>
                  <Select className="w-[551px]">未選択</Select>
                </div>
              </div>
              <div className="ml-[59px] mt-[39px] flex w-[134px] flex-col gap-[13px]">
                <Button className="w-[134px]">追加→</Button>
                <Button className="w-[134px]">←削除</Button>
              </div>
              <div className="ml-[156px] mt-[26px] flex h-[62px] w-[763px] items-center border-b-2 border-[#dee2e6] pl-[13px] pt-[2px] font-bold">
                <span className="w-[199px]">施策</span>
                <span>
                  対象建物
                  <Kana className="w-[13px]" scale="-translate-x-[6px]">
                    ・
                  </Kana>
                  地表面
                </span>
              </div>
            </div>
          </Panel>

          <footer className="relative mt-[26px] flex h-[62px] items-center justify-end">
            <span className="size-[26px] rounded-[6px] border-2 border-[#bfc3c7]" />
            <span className="ml-[14px] w-[423px] whitespace-nowrap">
              保存
              <Kana className="w-[86px]" scale="scale-x-[0.83]">
                に続けて
              </Kana>
              <Kana className="w-[144px]" scale="scale-x-[0.692]">
                シミュレーション
              </Kana>
              <Kana className="w-[21px]" scale="scale-x-[0.8]">
                を
              </Kana>
              開始
              <Kana className="w-[42px]" scale="scale-x-[0.77]">
                する
              </Kana>
            </span>
            <Button className="w-[94px]">保存</Button>
            <Button className="ml-[13px] w-[141px]">
              <Kana className="w-[99px]" scale="scale-x-[0.76]">
                キャンセル
              </Kana>
            </Button>
            <div className="absolute left-[1821px] top-[-32px] h-[114px] w-[176px] border-x-[21px] border-y-[21px] border-[#4e95da]" />
          </footer>
        </main>
      </div>
    </div>
  );
}
